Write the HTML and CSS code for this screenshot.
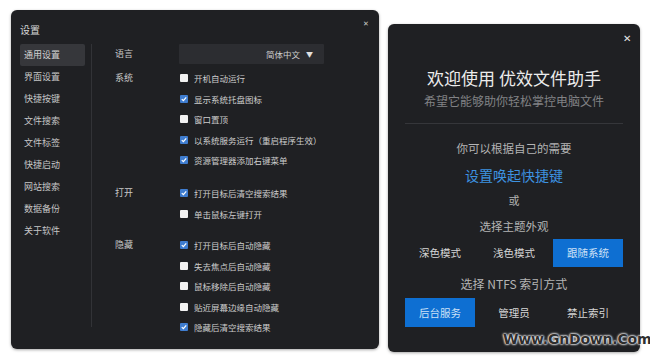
FILE: index.html
```html
<!DOCTYPE html>
<html lang="zh">
<head>
<meta charset="utf-8">
<link rel="stylesheet" href="styles.css">
</head>
<body>
<div class="stage">
  <section class="settings">
    <div class="s-head">
      <span class="s-title">设置</span>
      <span class="s-close">✕</span>
    </div>
    <div class="s-body">
      <nav class="side">
        <div class="side-item active">通用设置</div>
        <div class="side-item">界面设置</div>
        <div class="side-item">快捷按键</div>
        <div class="side-item">文件搜索</div>
        <div class="side-item">文件标签</div>
        <div class="side-item">快捷启动</div>
        <div class="side-item">网站搜索</div>
        <div class="side-item">数据备份</div>
        <div class="side-item">关于软件</div>
      </nav>
      <div class="main">
        <div class="group">
          <div class="label lang-label">语言</div>
          <div class="controls">
            <div class="select"><span>简体中文</span><span class="caret">▼</span></div>
          </div>
        </div>
        <div class="group g-sys">
          <div class="label">系统</div>
          <div class="controls">
            <div class="row"><span class="cb"></span>开机自动运行</div>
            <div class="row"><span class="cb on"><svg viewBox="0 0 9 9"><path d="M2 4.6 L3.8 6.3 L7 2.6" /></svg></span>显示系统托盘图标</div>
            <div class="row"><span class="cb"></span>窗口置顶</div>
            <div class="row"><span class="cb on"><svg viewBox="0 0 9 9"><path d="M2 4.6 L3.8 6.3 L7 2.6" /></svg></span>以系统服务运行（重启程序生效）</div>
            <div class="row"><span class="cb on"><svg viewBox="0 0 9 9"><path d="M2 4.6 L3.8 6.3 L7 2.6" /></svg></span>资源管理器添加右键菜单</div>
          </div>
        </div>
        <div class="group g-gap">
          <div class="label">打开</div>
          <div class="controls">
            <div class="row"><span class="cb on"><svg viewBox="0 0 9 9"><path d="M2 4.6 L3.8 6.3 L7 2.6" /></svg></span>打开目标后清空搜索结果</div>
            <div class="row"><span class="cb"></span>单击鼠标左键打开</div>
          </div>
        </div>
        <div class="group g-gap2">
          <div class="label">隐藏</div>
          <div class="controls">
            <div class="row"><span class="cb on"><svg viewBox="0 0 9 9"><path d="M2 4.6 L3.8 6.3 L7 2.6" /></svg></span>打开目标后自动隐藏</div>
            <div class="row"><span class="cb"></span>失去焦点后自动隐藏</div>
            <div class="row"><span class="cb"></span>鼠标移除后自动隐藏</div>
            <div class="row"><span class="cb"></span>贴近屏幕边缘自动隐藏</div>
            <div class="row"><span class="cb on"><svg viewBox="0 0 9 9"><path d="M2 4.6 L3.8 6.3 L7 2.6" /></svg></span>隐藏后清空搜索结果</div>
          </div>
        </div>
      </div>
    </div>
  </section>

  <section class="welcome">
    <div class="w-head"><span class="w-close">✕</span></div>
    <h1 class="w-title">欢迎使用 优效文件助手</h1>
    <p class="w-sub">希望它能够助你轻松掌控电脑文件</p>
    <div class="w-rule"></div>
    <p class="w-text t1">你可以根据自己的需要</p>
    <p class="w-link">设置唤起快捷键</p>
    <p class="w-text t2">或</p>
    <p class="w-text t3">选择主题外观</p>
    <div class="btns b1">
      <div class="btn">深色模式</div>
      <div class="btn">浅色模式</div>
      <div class="btn primary">跟随系统</div>
    </div>
    <p class="w-text t4">选择 NTFS 索引方式</p>
    <div class="btns b2">
      <div class="btn primary">后台服务</div>
      <div class="btn">管理员</div>
      <div class="btn">禁止索引</div>
    </div>
  </section>

  <div class="watermark">Www.GnDown.Com</div>
</div>
</body>
</html>
```

FILE: styles.css
```css
html, body {
  margin: 0;
  padding: 0;
  background: #ffffff;
}
body {
  font-family: "Noto Sans CJK SC", "Noto Sans", sans-serif;
  width: 650px;
  height: 358px;
  overflow: hidden;
}
.stage {
  position: relative;
  display: flex;
  align-items: flex-start;
  gap: 9px;
  padding: 10px 0 0 11px;
  height: 348px;
}

/* ---------- settings panel ---------- */
.settings {
  width: 368px;
  height: 339px;
  box-sizing: border-box;
  background: #1f2023;
  border-radius: 6px;
  padding: 13px 9px 0 9px;
  box-shadow: 0 1px 3px rgba(0,0,0,0.35);
  color: #cfcfcf;
}
.s-head {
  display: flex;
  justify-content: space-between;
  align-items: flex-start;
  height: 14px;
}
.s-title {
  font-size: 10px;
  line-height: 14px;
  color: #d6d6d6;
}
.s-close {
  font-size: 7px;
  line-height: 8px;
  margin-top: -4px;
  margin-right: 1px;
  color: #c8c8c8;
}
.s-body {
  display: flex;
  margin-top: 7px;
}
.side {
  width: 72px;
  height: 283px;
  border-right: 1px solid #323337;
  box-sizing: border-box;
}
.side-item {
  width: 65px;
  height: 22px;
  line-height: 22px;
  box-sizing: border-box;
  padding-left: 4px;
  font-size: 9px;
  color: #c6c6c6;
  border-radius: 2px;
}
.side-item.active {
  background: #36373b;
  color: #d2d2d2;
}
.main {
  padding-left: 23px;
  display: flex;
  flex-direction: column;
}
.group {
  display: flex;
}
.label {
  width: 64px;
  font-size: 9px;
  line-height: 20.5px;
  color: #c8c8c8;
}
.lang-label {
  line-height: 20px;
}
.controls {
  display: flex;
  flex-direction: column;
}
.select {
  width: 145px;
  height: 20px;
  background: #2c2d31;
  border-radius: 1px;
  display: flex;
  justify-content: flex-end;
  align-items: center;
  gap: 6px;
  padding-right: 11px;
  box-sizing: border-box;
  font-size: 8.5px;
  color: #cfcfcf;
}
.caret {
  font-size: 7px;
  color: #e0e0e0;
}
.g-sys { margin-top: 4px; }
.g-gap { margin-top: 12.5px; }
.g-gap2 { margin-top: 11px; }
.row {
  height: 20.5px;
  display: flex;
  align-items: center;
  font-size: 8.5px;
  color: #cdcdcd;
  white-space: nowrap;
}
.cb {
  width: 8px;
  height: 8px;
  margin-left: 1px;
  margin-right: 6px;
  background: #f2f2f2;
  border-radius: 1px;
  flex: none;
  display: flex;
}
.cb.on {
  background: #3f7dd0;
}
.cb svg {
  width: 8px;
  height: 8px;
}
.cb svg path {
  fill: none;
  stroke: #ffffff;
  stroke-width: 1.4;
}

/* ---------- welcome panel ---------- */
.welcome {
  margin-top: 14px;
  width: 252px;
  height: 328px;
  box-sizing: border-box;
  background: #1f2023;
  border-radius: 6px;
  padding: 8px 17px 0 17px;
  box-shadow: 0 1px 3px rgba(0,0,0,0.35);
  display: flex;
  flex-direction: column;
  align-items: center;
  text-align: center;
}
.w-head {
  align-self: stretch;
  display: flex;
  justify-content: flex-end;
  height: 12px;
}
.w-close {
  font-size: 10px;
  line-height: 12px;
  color: #e6e6e6;
  margin-right: -8px;
}
.w-title {
  margin: 22px 0 0 0;
  font-size: 17px;
  line-height: 24px;
  font-weight: normal;
  color: #ececec;
}
.w-sub {
  margin: 3px 0 0 0;
  font-size: 12px;
  line-height: 16px;
  color: #818285;
}
.w-rule {
  align-self: stretch;
  height: 1px;
  background: #35363a;
  margin-top: 14px;
}
.w-text {
  margin: 0;
  font-size: 11.5px;
  line-height: 16px;
  color: #b4b4b4;
}
.t1 { margin-top: 16px; }
.w-link {
  margin: 9px 0 0 0;
  font-size: 14px;
  line-height: 20px;
  color: #3d92e0;
}
.t2 { margin-top: 7px; font-size: 11px; }
.t3 { margin-top: 10px; }
.t4 { margin-top: 9px; font-size: 12px; }
.btns {
  align-self: stretch;
  display: flex;
  gap: 4px;
}
.b1 { margin-top: 5px; }
.b2 { margin-top: 6px; }
.btn {
  flex: 1;
  height: 28px;
  line-height: 28px;
  font-size: 10.5px;
  color: #d6d6d6;
}
.b2 .btn {
  height: 29px;
  line-height: 29px;
}
.btn.primary {
  background: #0e6fd2;
  color: #cfe2f7;
}

/* ---------- watermark ---------- */
.watermark {
  position: absolute;
  left: 503px;
  top: 329px;
  font-family: "DejaVu Sans", sans-serif;
  font-weight: bold;
  font-size: 14px;
  line-height: 20px;
  color: #2e2e2e;
  text-shadow: 0 0 2px #ffffff, 0 0 2px #ffffff, 0 0 3px #ffffff;
  letter-spacing: -0.2px;
}
```
